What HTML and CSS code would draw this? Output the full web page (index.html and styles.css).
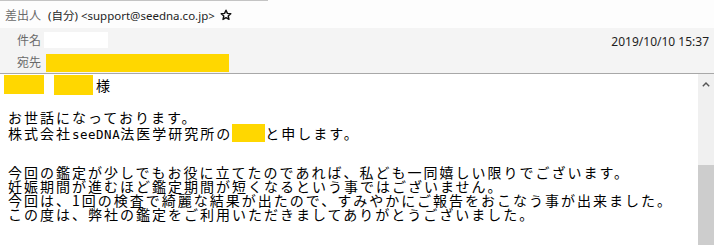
FILE: index.html
```html
<!DOCTYPE html>
<html lang="ja">
<head>
<meta charset="utf-8">
<link rel="stylesheet" href="styles.css">
</head>
<body>
<div class="header">
  <div class="from-row">
    <div class="from">
      <span class="label">差出人</span>
      <span class="from-value">(自分) &lt;support@seedna.co.jp&gt;</span>
      <svg class="star" width="12" height="12" viewBox="0 0 12 12"><path d="M6 1.2 L7.4 4.4 L10.8 4.7 L8.2 7 L9 10.4 L6 8.6 L3 10.4 L3.8 7 L1.2 4.7 L4.6 4.4 Z" fill="none" stroke="#111" stroke-width="1.4" stroke-linejoin="round"/></svg>
    </div>
  </div>
  <div class="row subject-row">
    <span class="label">件名</span>
    <span class="subject-box"></span>
    <span class="date">2019/10/10 15:37</span>
  </div>
  <div class="row to-row">
    <span class="label">宛先</span>
    <span class="to-box"></span>
  </div>
</div>
<div class="main">
  <div class="content">
    <div class="greet"><span class="redact r1"></span><span class="redact r2"></span><span class="sama">様</span></div>
    <p class="para p2">お世話になっております。<br>株式会社<span class="half">seeDNA</span>法医学研究所の<span class="redact r3"></span>と申します。</p>
    <p class="para">今回の鑑定が少しでもお役に立てたのであれば、私ども一同嬉しい限りでございます。<br>妊娠期間が進むほど鑑定期間が短くなるという事ではございません。<br>今回は、1回の検査で綺麗な結果が出たので、すみやかにご報告をおこなう事が出来ました。<br>この度は、弊社の鑑定をご利用いただきましてありがとうございました。</p>
  </div>
  <div class="scrollbar">
    <div class="track">
      <svg class="chev" width="8" height="5" viewBox="0 0 8 5"><path d="M0.8 4.2 L4 1 L7.2 4.2" fill="none" stroke="#555" stroke-width="1.4"/></svg>
    </div>
    <div class="thumb"></div>
  </div>
</div>
</body>
</html>
```
FILE: styles.css
```css
html, body {
  margin: 0;
  padding: 0;
  background: #fff;
}
body {
  width: 714px;
  height: 245px;
  overflow: hidden;
}
.header {
  background: #f4f4f4;
  height: 73px;
  border-bottom: 1px solid #a8a8a8;
  font-family: "Noto Sans", "Noto Sans CJK JP", sans-serif;
  font-size: 12px;
}
.from-row {
  height: 28px;
  background: #fdfdfd;
}
.from {
  width: 268px;
  height: 28px;
  box-sizing: border-box;
  border-top: 1px solid #c4c4c4;
  display: flex;
  align-items: center;
}
.label {
  width: 41px;
  text-align: right;
  color: #6a6a6a;
  flex: none;
}
.from-value {
  margin-left: 7px;
  color: #1e1e1e;
  font-size: 11.5px;
}
.star {
  margin-left: 5px;
  flex: none;
}
.row {
  display: flex;
  align-items: center;
}
.subject-row {
  height: 23px;
}
.subject-box {
  margin-left: 3px;
  width: 64px;
  height: 16px;
  background: #fff;
}
.date {
  margin-left: auto;
  margin-right: 5px;
  color: #1e1e1e;
  padding-top: 4px;
}
.to-row {
  height: 22px;
  align-items: flex-end;
}
.to-row .label {
  align-self: center;
}
.to-box {
  margin-left: 5px;
  width: 183px;
  height: 18px;
  margin-bottom: 1px;
  background: #ffd700;
}
.main {
  display: flex;
  height: 171px;
}
.content {
  flex: 1;
  font-family: "Noto Sans CJK JP", sans-serif;
  font-size: 14px;
  letter-spacing: 2px;
  line-height: 14px;
  color: #000;
  white-space: nowrap;
  padding-left: 8px;
  padding-top: 2px;
}
.greet {
  display: flex;
  align-items: flex-start;
  height: 20px;
  margin-left: -4px;
  margin-bottom: 14px;
}
.redact {
  display: inline-block;
  background: #ffd700;
}
.r1 {
  width: 40px;
  height: 19px;
  margin-top: -1px;
}
.r2 {
  width: 39px;
  height: 20px;
  margin-left: 10px;
  margin-top: -1px;
}
.sama {
  margin-left: 3px;
  padding-top: 2px;
}
.r3 {
  width: 33px;
  height: 18px;
  vertical-align: -3px;
}
.half {
  font-family: "DejaVu Sans Mono", monospace;
  font-size: 12.5px;
  letter-spacing: 0.5px;
}
.para {
  margin: 0;
}
.p2 {
  margin-bottom: 23px;
}
.scrollbar {
  width: 16px;
  display: flex;
  flex-direction: column;
}
.track {
  height: 91px;
  background: #f0f0f0;
  display: flex;
  justify-content: center;
  padding-top: 8px;
  box-sizing: border-box;
}
.thumb {
  flex: 1;
  background: #cdcdcd;
}
```
